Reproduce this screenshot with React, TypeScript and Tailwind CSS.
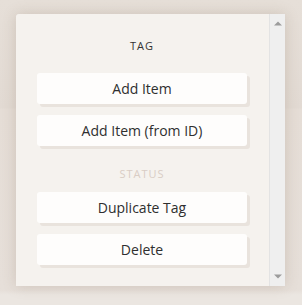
import React from "react";

function Btn({ label }: { label: string }) {
  return (
    <div className="w-[210px] h-[31px] ml-[21px] rounded-[3px] bg-[#fefdfc] shadow-[3px_3px_0_#e9e3dd] flex items-center justify-center text-[14px] text-[#2f2f2f]">
      {label}
    </div>
  );
}

export default function App() {
  return (
    <div
      className="w-[302px] h-[305px] bg-[linear-gradient(to_bottom,#e6dfd8_0px,#e2dad3_108px,#e5ddd6_109px,#e6dfd9_290px,#ebe6e1_295px,#ebe6e1_305px)] pt-[14px] pl-[16px]"
      style={{ fontFamily: '"Open Sans", "Noto Sans", sans-serif' }}
    >
      <div className="w-[269px] h-[272px] flex rounded-tl-[3px] overflow-hidden shadow-[0_0_14px_rgba(120,95,75,0.22)]">
        <div className="w-[253px] bg-[#f5f2ee] flex flex-col pt-[24px]">
          <div className="h-[16px] leading-[16px] text-[11px] tracking-[1px] text-center text-[#333] pr-[1px]">
            TAG
          </div>
          <div className="mt-[19px]">
            <Btn label="Add Item" />
          </div>
          <div className="mt-[11px]">
            <Btn label="Add Item (from ID)" />
          </div>
          <div className="mt-[20px] h-[16px] leading-[16px] text-[11px] tracking-[1px] text-center text-[#d9cdc5] pr-[1px]">
            STATUS
          </div>
          <div className="mt-[10px]">
            <Btn label="Duplicate Tag" />
          </div>
          <div className="mt-[11px]">
            <Btn label="Delete" />
          </div>
        </div>
        <div className="w-[16px] bg-[#efefef] border-l border-[#e3e3e3] flex flex-col items-center justify-between py-[7px]">
          <svg width="8" height="5" viewBox="0 0 8 5">
            <polygon points="0,4.5 8,4.5 4,0.5" fill="#9c9c9c" />
          </svg>
          <svg width="8" height="5" viewBox="0 0 8 5">
            <polygon points="0,0.5 8,0.5 4,4.5" fill="#9c9c9c" />
          </svg>
        </div>
      </div>
    </div>
  );
}
